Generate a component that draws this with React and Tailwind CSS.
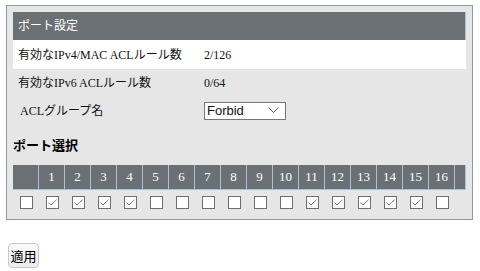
const ports = Array.from({ length: 16 }, (_, i) => i + 1);
const checked = [1, 2, 3, 4, 11, 12, 13, 14, 15];

function Box({ on }) {
  return (
    <span className="w-[13px] h-[13px] border border-[#6e6e6e] bg-white flex items-center justify-center">
      {on && (
        <svg width="9" height="7" viewBox="0 0 9 7">
          <path d="M0.5 3.5 L3 6 L8.5 0.8" fill="none" stroke="#6f7f95" strokeWidth="1" />
        </svg>
      )}
    </span>
  );
}

export default function App() {
  const serif = { fontFamily: '"Liberation Serif", "Noto Sans CJK JP", serif' };
  return (
    <div className="w-[480px] h-[271px] bg-white overflow-hidden pt-[5px] pl-[6px]" style={serif}>
      <div className="w-[467px] h-[215px] border border-[#8d9ba4] bg-[#e6e6e6] px-[6px] pt-[6px]">
        <div className="h-[28px] bg-[#6b7074] text-white text-[12px] flex items-center pl-[5px] border-r border-[#a9c3d6]">
          ポート設定
        </div>
        <div className="h-[29px] bg-white flex items-center text-[12px] text-[#111]">
          <span className="w-[191px] pl-[5px]">有効なIPv4/MAC ACLルール数</span>
          <span>2/126</span>
        </div>
        <div className="h-[28px] flex items-center text-[12px] text-[#111]">
          <span className="w-[191px] pl-[5px]">有効なIPv6 ACLルール数</span>
          <span>0/64</span>
        </div>
        <div className="h-[27px] flex items-center text-[12px] text-[#111]">
          <span className="w-[191px] pl-[7px]">ACLグループ名</span>
          <div className="w-[82px] h-[18px] border border-[#767676] bg-white flex items-center justify-between pl-[2px] pr-[6px] text-[13px]" style={{ fontFamily: '"Liberation Sans", Arial, sans-serif' }}>
            <span>Forbid</span>
            <svg width="11" height="7" viewBox="0 0 11 7">
              <path d="M0.5 0.5 L5.5 5.5 L10.5 0.5" fill="none" stroke="#555" strokeWidth="1" />
            </svg>
          </div>
        </div>
        <div className="h-[41px] flex items-center text-[13px] font-bold text-black" style={{ fontFamily: '"Noto Sans CJK JP", sans-serif' }}>
          ポート選択
        </div>
        <div className="grid grid-cols-[25px_repeat(16,26px)_1fr] h-[25px] bg-[#6b7074] border-b border-[#a9c3d6] border-r">
          <div />
          {ports.map((p) => (
            <div key={p} className="border-l border-[#a9c3d6] text-white text-[13px] flex items-center justify-center">
              {p}
            </div>
          ))}
          <div className="border-l border-[#a9c3d6]" />
        </div>
        <div className="grid grid-cols-[25px_repeat(16,26px)_1fr] h-[25px] items-center">
          <div className="flex justify-center pl-[2px]"><Box on={false} /></div>
          {ports.map((p) => (
            <div key={p} className="flex justify-center pl-[2px]">
              <Box on={checked.includes(p)} />
            </div>
          ))}
          <div />
        </div>
      </div>
      <div className="mt-[23px] ml-[2px]">
        <button className="w-[31px] h-[25px] rounded-[4px] border border-[#c8c8c8] bg-gradient-to-b from-[#fafafa] to-[#ececec] text-[13px] text-black flex items-center justify-center" style={{ fontFamily: '"Noto Sans CJK JP", sans-serif' }}>
          適用
        </button>
      </div>
    </div>
  );
}
